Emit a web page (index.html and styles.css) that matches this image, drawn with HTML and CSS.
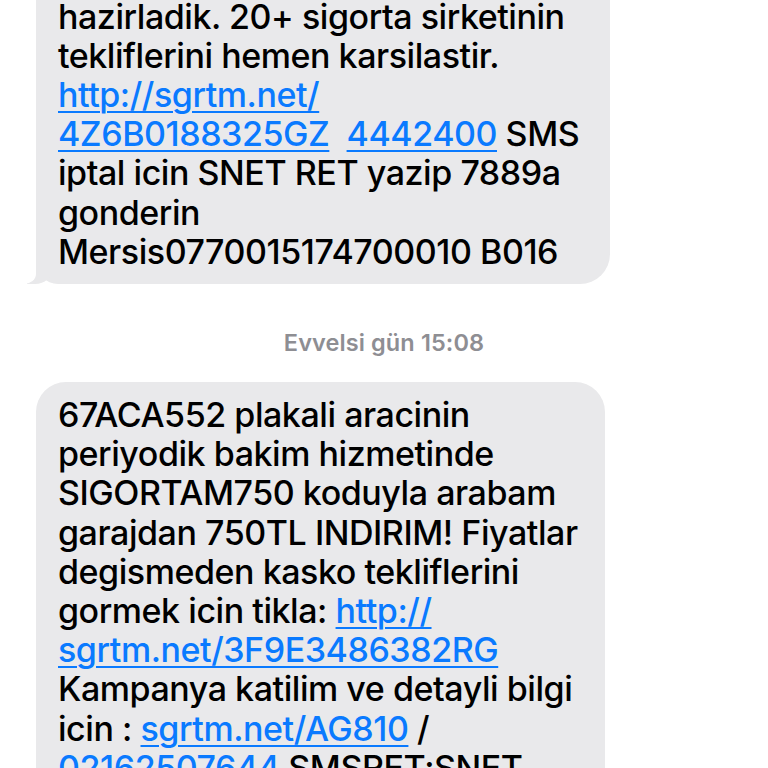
FILE: index.html
```html
<!DOCTYPE html>
<html lang="tr">
<head>
<meta charset="utf-8">
<title>Mesajlar</title>
<link rel="stylesheet" href="styles.css">
</head>
<body>
<main class="thread">
  <div class="bubble bubble-first">
    hazirladik. 20+ sigorta sirketinin<br>
    tekliflerini hemen karsilastir.<br>
    <a href="#">http://sgrtm.net/<br>4Z6B0188325GZ</a>&nbsp; <a href="#">4442400</a> SMS<br>
    iptal icin SNET RET yazip 7889a<br>
    gonderin<br>
    Mersis0770015174700010 B016
  </div>
  <div class="stamp"><span class="stamp-day">Evvelsi gün</span> <span class="stamp-time">15:08</span></div>
  <div class="bubble bubble-second">
    67ACA552 plakali aracinin<br>
    periyodik bakim hizmetinde<br>
    SIGORTAM750 koduyla arabam<br>
    garajdan 750TL INDIRIM! Fiyatlar<br>
    degismeden kasko tekliflerini<br>
    gormek icin tikla: <a href="#">http://<br>sgrtm.net/3F9E3486382RG</a><br>
    Kampanya katilim ve detayli bilgi<br>
    icin : <a href="#">sgrtm.net/AG810</a> /<br>
    <a href="#">02162507644</a> SMSRET:SNET
  </div>
</main>
</body>
</html>
```

FILE: styles.css
```css
html, body {
  margin: 0;
  padding: 0;
  background: #ffffff;
  overflow: hidden;
}
body {
  width: 768px;
  height: 768px;
  font-family: Inter, "Noto Sans", "Liberation Sans", sans-serif;
}
.thread {
  display: flex;
  flex-direction: column;
  align-items: flex-start;
  padding-left: 36px;
}
.bubble {
  position: relative;
  box-sizing: border-box;
  background: #e9e9eb;
  color: #000000;
  font-size: 34px;
  font-weight: 500;
  line-height: 39.2px;
  letter-spacing: -0.45px;
  white-space: nowrap;
  border-radius: 30px;
  padding-left: 22px;
}
.bubble a {
  color: #0a7aff;
  text-decoration: underline;
  text-decoration-thickness: 2px;
  text-underline-offset: 4px;
}
.bubble-first {
  width: 574px;
  margin-top: -60px;
  padding-top: 56.5px;
  padding-bottom: 13.5px;
  border-radius: 0 30px 30px 22px;
}
.bubble-first::before {
  content: "";
  position: absolute;
  left: -9px;
  bottom: 0;
  width: 26px;
  height: 26px;
  background: #e9e9eb;
  border-bottom-right-radius: 18px 16px;
}
.bubble-first::after {
  content: "";
  position: absolute;
  left: -26px;
  bottom: 0;
  width: 26px;
  height: 26px;
  background: #ffffff;
  border-bottom-right-radius: 12px 10px;
}
.stamp {
  align-self: center;
  margin: 45px 0 26px -36px;
  font-size: 23.5px;
  line-height: 27px;
  font-weight: 600;
  color: #8e8e93;
  letter-spacing: 0.1px;
}
.bubble-second {
  width: 569px;
  padding-top: 12.5px;
  padding-bottom: 14px;
}
```
